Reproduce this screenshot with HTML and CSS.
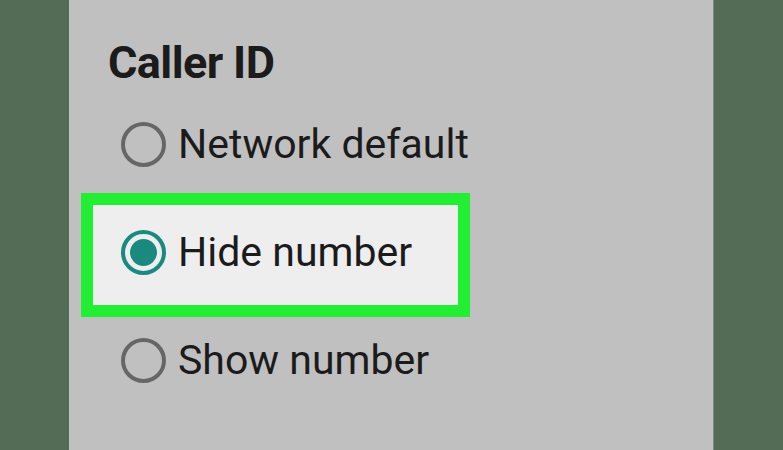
FILE: index.html
```html
<!DOCTYPE html>
<html lang="en">

<head>
    <meta charset="utf-8">
    <title>Caller ID</title>
    <meta name="viewport" content="width=device-width, initial-scale=1">
    <link rel="stylesheet" href="styles.css">
</head>

<body>
    <div class="screen">
        <h2 class="title">Caller ID</h2>
        <div class="options" role="radiogroup" aria-label="Caller ID">
            <div class="option" role="radio" aria-checked="false">
                <span class="radio"></span>
                <span class="label">Network default</span>
            </div>
            <div class="option selected" role="radio" aria-checked="true">
                <span class="radio"></span>
                <span class="label">Hide number</span>
            </div>
            <div class="option" role="radio" aria-checked="false">
                <span class="radio"></span>
                <span class="label">Show number</span>
            </div>
        </div>
    </div>
</body>

</html>
```

FILE: styles.css
```css
body {
    margin: 0;
    height: 450px;
    overflow: hidden;
    background-color: #546b55;
    font-family: Roboto, "Noto Sans", sans-serif;
    color: #1b1b1b;
}

.screen {
    /* the phone's dialog, a grey strip in the middle */
    margin-left: 69px;
    width: 645px;
    height: 450px;
    border-right: 1px solid #7d8f7d;
    background-color: #c0c0c0;
    padding: 40px 0 0 0;
    box-sizing: border-box;
}

.title {
    margin: 0 0 12px 39px;
    font-size: 45px;
    line-height: 45px;
    font-weight: 700;
    letter-spacing: -0.6px;
}

.options {
    display: flex;
    flex-direction: column;
    gap: 8px;
    margin-left: 24px;
}

.option {
    display: flex;
    align-items: center;
    gap: 12px;
    width: 365px;
    height: 100px;
    padding: 0 0 6px 28px;
    box-sizing: border-box;
}

.option.selected {
    background-color: #eeeeee;
    outline: 12px solid #22ee33;
}

.radio {
    flex: none;
    width: 45px;
    height: 45px;
    border: 4px solid #666666;
    border-radius: 50%;
    box-sizing: border-box;
    position: relative;
}

.selected .radio {
    border-color: #1a8a80;
}

.selected .radio::after {
    /* the filled dot */
    content: "";
    position: absolute;
    top: 5px;
    left: 5px;
    right: 5px;
    bottom: 5px;
    border-radius: 50%;
    background-color: #1a8a80;
}

.label {
    font-size: 41px;
    line-height: 41px;
    white-space: nowrap;
}
```
